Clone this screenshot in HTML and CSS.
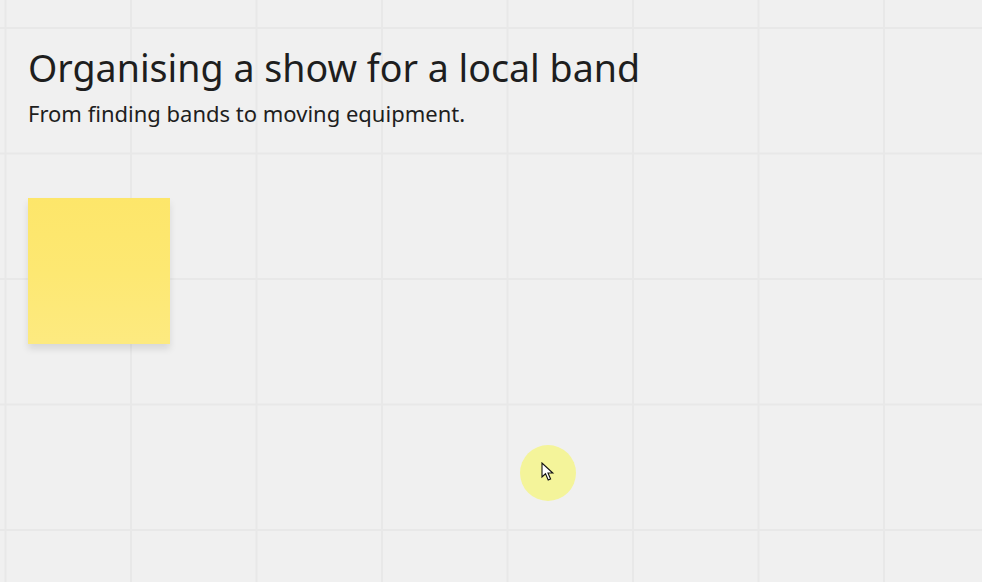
FILE: index.html
```html
<!DOCTYPE html>
<html>
<head>
<meta charset="utf-8">
<link rel="stylesheet" href="styles.css">
</head>
<body>
<main class="board">
  <header class="heading">
    <h1 class="title">Organising a show for a local band</h1>
    <p class="subtitle">From finding bands to moving equipment.</p>
  </header>
  <div class="sticky"></div>
  <div class="cursor-halo">
    <svg class="cursor" width="14" height="20" viewBox="0 0 14 20">
      <path d="M1 1 L1 15 L4.5 11.8 L7.2 18 L9.6 17 L7 11 L11.8 11 Z" fill="#fff" stroke="#111" stroke-width="1.1" stroke-linejoin="miter"/>
    </svg>
  </div>
</main>
</body>
</html>
```
FILE: styles.css
```css
html, body {
  margin: 0;
  padding: 0;
  width: 982px;
  height: 582px;
  overflow: hidden;
}
body {
  background-color: #f0f0f0;
  background-image:
    linear-gradient(to right, #e8e8e8 0, #e8e8e8 2px, transparent 2px),
    linear-gradient(to bottom, #e8e8e8 0, #e8e8e8 2px, transparent 2px);
  background-size: 125.5px 125.5px;
  background-position: 4.5px 27px;
  font-family: "Noto Sans", "Open Sans", sans-serif;
  color: #1e1e1e;
}
.board {
  position: relative;
  width: 982px;
  height: 582px;
  padding: 43px 28px 0;
  box-sizing: border-box;
}
.heading {
  display: flex;
  flex-direction: column;
}
.title {
  margin: 0;
  font-size: 37.6px;
  font-weight: 400;
  line-height: 50px;
  letter-spacing: 0;
}
.subtitle {
  margin: 6px 0 0;
  font-size: 22px;
  line-height: 28px;
}
.sticky {
  margin-top: 71px;
  width: 142px;
  height: 146px;
  background: linear-gradient(to bottom, #fde66a 0%, #fde872 50%, #fdea80 100%);
  box-shadow: 0 5px 7px rgba(0, 0, 0, 0.10);
}
.cursor-halo {
  position: absolute;
  left: 520px;
  top: 445px;
  width: 56px;
  height: 56px;
  border-radius: 50%;
  background: #f4f49a;
}
.cursor {
  position: absolute;
  left: 21px;
  top: 17px;
}
```
